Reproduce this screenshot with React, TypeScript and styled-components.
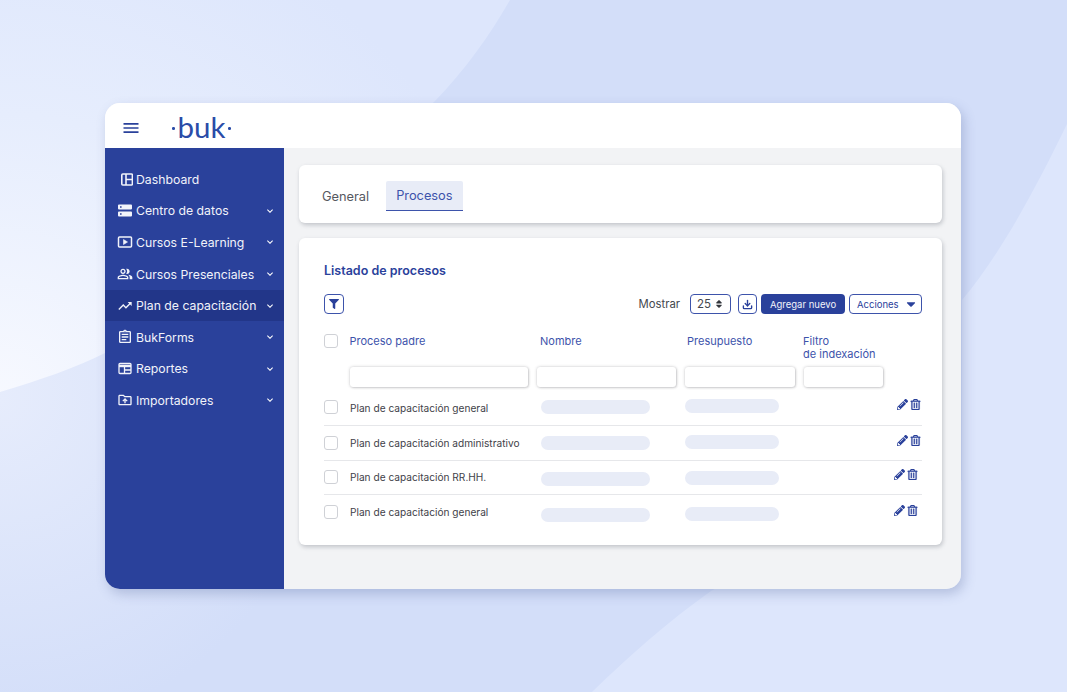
import { ReactNode } from "react";
import styled, { createGlobalStyle } from "styled-components";
import {
  MdMenu,
  MdOutlinePeopleAlt,
  MdTrendingUp,
  MdOutlineAssignment,
  MdOutlineDriveFolderUpload,
  MdKeyboardArrowDown,
} from "react-icons/md";
import { FaFilter, FaSort, FaCaretDown, FaPencilAlt, FaRegTrashAlt } from "react-icons/fa";
import { LuDownload } from "react-icons/lu";

const GlobalStyle = createGlobalStyle`
  html, body {
    margin: 0;
    padding: 0;
  }
  body {
    font-family: Inter, "Liberation Sans", sans-serif;
  }
`;

const Page = styled.div`
  position: relative;
  width: 1067px;
  height: 692px;
  padding: 103px 0 0 105px;
  box-sizing: border-box;
  overflow: hidden;
  background: radial-gradient(circle 520px at 0 400px, #f7f9ff 0%, #e6edfd 55%, #dde6fc 100%) #dde6fc;
`;

const Backdrop = styled.svg`
  position: absolute;
  top: 0;
  left: 0;
`;

const FrameShadow = styled.div`
  position: relative;
  width: 856px;
  height: 486px;
  border-radius: 15px;
  box-shadow: 3px 5px 12px rgba(60, 80, 140, 0.26);
`;

const Frame = styled.div`
  width: 856px;
  height: 486px;
  border-radius: 15px;
  overflow: hidden;
  background: #f2f3f5;
  display: flex;
  flex-direction: column;
`;

const TopBar = styled.header`
  height: 45px;
  flex: none;
  box-sizing: border-box;
  background: #fff;
  display: flex;
  align-items: center;
  padding: 5px 0 0 16px;
  color: #2a419b;
`;

const Logo = styled.span`
  display: flex;
  align-items: center;
  margin-left: 31px;
  color: #2a4ca8;
  font-family: Lato, sans-serif;
  font-size: 29.5px;
  line-height: 32px;
  gap: 3px;
  margin-top: -3px;

  &::before,
  &::after {
    content: "";
    width: 2.5px;
    height: 2.5px;
    border-radius: 50%;
    background: #2a4ca8;
    margin-top: 4px;
  }
`;

const Body = styled.div`
  flex: 1;
  display: flex;
  min-height: 0;
`;

const Sidebar = styled.nav`
  width: 179px;
  flex: none;
  background: #2a419b;
  padding-top: 15.5px;
  box-sizing: border-box;
`;

const NavRow = styled.div<{ $active?: boolean; $indent?: number }>`
  height: 31.6px;
  display: flex;
  align-items: center;
  padding-left: ${(p) => p.$indent ?? 12}px;
  padding-right: 8px;
  box-sizing: border-box;
  gap: 3px;
  color: #fff;
  font-size: 12.25px;
  background: ${(p) => (p.$active ? "#223689" : "transparent")};

  svg {
    flex: none;
  }
`;

const NavLabel = styled.span`
  flex: 1;
  white-space: nowrap;
  color: #f1f3fa;
`;

const Main = styled.main`
  flex: 1;
  padding: 17px 19px 0 15px;
  display: flex;
  flex-direction: column;
  gap: 15px;
`;

const Card = styled.section`
  background: #fff;
  border-radius: 6px;
  box-shadow: 1px 2px 4px rgba(70, 75, 90, 0.28);
`;

const TabsCard = styled(Card)`
  height: 58px;
  display: flex;
  padding: 16px 0 0 23px;
  box-sizing: border-box;
  gap: 17px;
`;

const Tab = styled.div<{ $active?: boolean }>`
  height: 30px;
  box-sizing: border-box;
  padding: ${(p) => (p.$active ? "0 10px" : "8px 0 0")};
  font-size: 12.8px;
  line-height: ${(p) => (p.$active ? "30px" : "16px")};
  color: ${(p) => (p.$active ? "#3d53ab" : "#55585f")};
  background: ${(p) => (p.$active ? "#e8ecf7" : "transparent")};
  border-bottom: ${(p) => (p.$active ? "1.5px solid #3d53ab" : "none")};
  border-radius: 2px 2px 0 0;
`;

const ListCard = styled(Card)`
  height: 307px;
  padding: 25px 20px 0 25px;
  box-sizing: border-box;
`;

const Title = styled.h2`
  margin: 0;
  font-size: 12.5px;
  line-height: 16px;
  font-weight: 600;
  color: #2a419b;
`;

const Toolbar = styled.div`
  margin-top: 15px;
  height: 20px;
  display: flex;
  align-items: center;
  gap: 4px;
`;

const Spacer = styled.div`
  flex: 1;
`;

const Mostrar = styled.span`
  font-size: 11.3px;
  color: #44474e;
  margin-right: 6px;
`;

const OutlineBox = styled.div<{ $w: number }>`
  width: ${(p) => p.$w}px;
  height: 20px;
  box-sizing: border-box;
  border: 1px solid #3d53ab;
  border-radius: 4px;
  background: #fff;
  color: #2a419b;
  display: flex;
  align-items: center;
  justify-content: center;
  font-size: 11.5px;
`;

const SelectBox = styled(OutlineBox)`
  color: #44474e;
  gap: 3px;
  margin-right: 3px;

  svg {
    color: #33363d;
  }
`;

const PrimaryButton = styled.div`
  width: 84px;
  height: 20px;
  background: #2a419b;
  border-radius: 4px;
  color: #f1f3fa;
  font-size: 9.5px;
  display: flex;
  align-items: center;
  justify-content: center;
`;

const ActionsButton = styled(OutlineBox)`
  font-size: 9.5px;
  justify-content: space-between;
  padding: 0 3px 0 7px;
`;

const TableGrid = styled.div`
  display: grid;
  grid-template-columns: 26px 187px 148px 119px 90px 1fr;
`;

const HeadRow = styled(TableGrid)`
  margin-top: 20px;
  height: 33px;
`;

const HeadCell = styled.div<{ $shift?: number }>`
  margin-left: ${(p) => p.$shift ?? 0}px;
  font-size: 11px;
  line-height: 13px;
  padding-top: 1px;
  color: #3d53ab;
`;

const FilterRow = styled(TableGrid)`
  height: 24px;
`;

const FilterInput = styled.div<{ $w: number }>`
  width: ${(p) => p.$w}px;
  height: 20px;
  background: #fff;
  border-radius: 3px;
  box-shadow: 0 0 3px rgba(60, 60, 70, 0.3), 1px 1px 2px rgba(60, 60, 70, 0.15);
`;

const Checkbox = styled.div`
  width: 14px;
  height: 14px;
  border: 1px solid #cfd1d6;
  border-radius: 3px;
  box-sizing: border-box;
  background: #fff;
`;

const RowsWrap = styled.div`
  display: flex;
  flex-direction: column;
`;

const Row = styled(TableGrid)<{ $h: number; $line?: boolean }>`
  height: ${(p) => p.$h}px;
  box-sizing: border-box;
  border-bottom: ${(p) => (p.$line ? "1px solid #e6e7ea" : "none")};
`;

const RowCheck = styled.div<{ $top: number }>`
  padding-top: ${(p) => p.$top}px;
`;

const RowName = styled.div<{ $top: number }>`
  padding-top: ${(p) => p.$top}px;
  font-size: 10.15px;
  line-height: 13px;
  color: #3f4249;
  white-space: nowrap;
`;

const Bar = styled.div<{ $w: number; $top: number; $x: number }>`
  width: ${(p) => p.$w}px;
  height: 14px;
  margin: ${(p) => p.$top}px 0 0 ${(p) => p.$x}px;
  background: #e8ecf7;
  border-radius: 7px;
`;

const RowActions = styled.div<{ $top: number; $right: number }>`
  grid-column: 5 / 7;
  display: flex;
  justify-content: flex-end;
  align-items: center;
  gap: 2px;
  height: 12px;
  margin-top: ${(p) => p.$top}px;
  padding-right: ${(p) => p.$right}px;
  color: #2a419b;
`;

const DashboardIcon = () => (
  <svg width="12" height="13" viewBox="0 0 12 13" fill="none" stroke="#f1f3fa" strokeWidth="1.6">
    <rect x="0.8" y="1" width="10.6" height="11" rx="1" />
    <path d="M5 1v11M5 6.5h6.4" />
  </svg>
);

const StorageIcon = () => (
  <svg width="16" height="14" viewBox="0 0 16 14" fill="#f1f3fa">
    <path
      fillRule="evenodd"
      d="M2 .5h12a1 1 0 0 1 1 1v3a1 1 0 0 1-1 1H2a1 1 0 0 1-1-1v-3a1 1 0 0 1 1-1zM3 2.2v1.6h1.6V2.2zM2 7.5h12a1 1 0 0 1 1 1v3a1 1 0 0 1-1 1H2a1 1 0 0 1-1-1v-3a1 1 0 0 1 1-1zM3 9.2v1.6h1.6V9.2z"
    />
  </svg>
);

const PlayIcon = () => (
  <svg width="16" height="14" viewBox="0 0 16 14" fill="none" stroke="#f1f3fa" strokeWidth="1.5">
    <rect x="1.5" y="2" width="13" height="10" rx="1" />
    <path d="M6.5 4.5v5l4-2.5z" fill="#f1f3fa" strokeWidth="0.6" />
  </svg>
);

const ReportIcon = () => (
  <svg width="16" height="15" viewBox="0 0 16 15" fill="none" stroke="#f1f3fa" strokeWidth="1.3">
    <rect x="2" y="2.5" width="12" height="10" rx="1" />
    <path d="M2 5h12" strokeWidth="2.4" />
    <path d="M7.5 9H14M7.5 6v6.5" />
  </svg>
);

const iconProps = { size: 16, color: "#f1f3fa" };

const navItems: { label: string; icon: ReactNode; active?: boolean; noArrow?: boolean; indent?: number }[] = [
  { label: "Dashboard", icon: <DashboardIcon />, noArrow: true, indent: 16 },
  { label: "Centro de datos", icon: <StorageIcon /> },
  { label: "Cursos E-Learning", icon: <PlayIcon /> },
  { label: "Cursos Presenciales", icon: <MdOutlinePeopleAlt {...iconProps} /> },
  { label: "Plan de capacitación", icon: <MdTrendingUp {...iconProps} />, active: true },
  { label: "BukForms", icon: <MdOutlineAssignment {...iconProps} /> },
  { label: "Reportes", icon: <ReportIcon /> },
  { label: "Importadores", icon: <MdOutlineDriveFolderUpload {...iconProps} /> },
];

const rows = [
  { name: "Plan de capacitación general", h: 35, check: 9, text: 10.5, a: 9, b: 8, act: 7, right: 1, line: true },
  { name: "Plan de capacitación administrativo", h: 34.5, check: 10, text: 10.5, a: 10, b: 9, act: 8, right: 1, line: true },
  { name: "Plan de capacitación RR.HH.", h: 34.5, check: 9.5, text: 10, a: 11.5, b: 10.5, act: 7.5, right: 4, line: true },
  { name: "Plan de capacitación general", h: 35, check: 10, text: 10.5, a: 13, b: 12, act: 9, right: 4, line: false },
];

export default function App() {
  return (
    <Page>
      <GlobalStyle />
      <Backdrop width="1067" height="692" viewBox="0 0 1067 692">
        <defs>
          <radialGradient id="blob" gradientUnits="userSpaceOnUse" cx="0" cy="400" r="330">
            <stop offset="0" stopColor="#e6ecfc" />
            <stop offset="1" stopColor="#d3def9" />
          </radialGradient>
        </defs>
        <path
          d="M510 0 H1067 V124 C1035 190 1000 255 962 300 L962 480 C880 520 790 550 711 591 C670 620 630 655 592 692 H0 V392 C40 380 75 368 105 353 C220 280 340 190 435 101 C465 70 490 35 510 0 Z"
          fill="url(#blob)"
        />
      </Backdrop>
      <FrameShadow>
        <Frame>
          <TopBar>
            <MdMenu size={20} />
            <Logo>buk</Logo>
          </TopBar>
          <Body>
            <Sidebar>
              {navItems.map((item) => (
                <NavRow key={item.label} $active={item.active} $indent={item.indent}>
                  {item.icon}
                  <NavLabel>{item.label}</NavLabel>
                  {!item.noArrow && <MdKeyboardArrowDown size={12} />}
                </NavRow>
              ))}
            </Sidebar>
            <Main>
              <TabsCard>
                <Tab>General</Tab>
                <Tab $active>Procesos</Tab>
              </TabsCard>
              <ListCard>
                <Title>Listado de procesos</Title>
                <Toolbar>
                  <OutlineBox $w={20}>
                    <FaFilter size={10} />
                  </OutlineBox>
                  <Spacer />
                  <Mostrar>Mostrar</Mostrar>
                  <SelectBox $w={41}>
                    25 <FaSort size={10} />
                  </SelectBox>
                  <OutlineBox $w={19}>
                    <LuDownload size={11} strokeWidth={3} />
                  </OutlineBox>
                  <PrimaryButton>Agregar nuevo</PrimaryButton>
                  <ActionsButton $w={73}>
                    Acciones <FaCaretDown size={14} />
                  </ActionsButton>
                </Toolbar>
                <HeadRow>
                  <Checkbox />
                  <HeadCell $shift={-0.5}>Proceso padre</HeadCell>
                  <HeadCell $shift={3}>Nombre</HeadCell>
                  <HeadCell $shift={2}>Presupuesto</HeadCell>
                  <HeadCell $shift={-1}>
                    Filtro
                    <br />
                    de indexación
                  </HeadCell>
                </HeadRow>
                <FilterRow>
                  <div />
                  <FilterInput $w={178} />
                  <FilterInput $w={139} />
                  <FilterInput $w={110} />
                  <FilterInput $w={79} />
                </FilterRow>
                <RowsWrap>
                  {rows.map((row, i) => (
                    <Row key={i} $h={row.h} $line={row.line}>
                      <RowCheck $top={row.check}>
                        <Checkbox />
                      </RowCheck>
                      <RowName $top={row.text}>{row.name}</RowName>
                      <Bar $w={109} $x={4} $top={row.a} />
                      <Bar $w={94} $x={0} $top={row.b} />
                      <RowActions $top={row.act} $right={row.right}>
                        <FaPencilAlt size={11} />
                        <FaRegTrashAlt size={11} stroke="currentColor" strokeWidth={12} />
                      </RowActions>
                    </Row>
                  ))}
                </RowsWrap>
              </ListCard>
            </Main>
          </Body>
        </Frame>
      </FrameShadow>
    </Page>
  );
}
